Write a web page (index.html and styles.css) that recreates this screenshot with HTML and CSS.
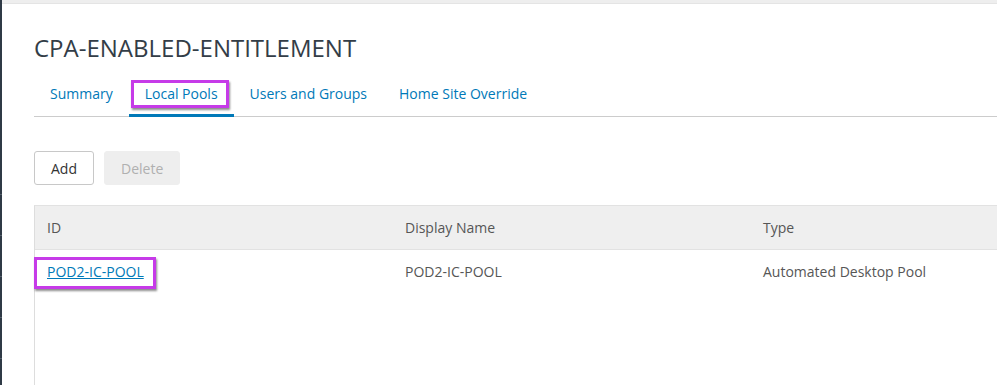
FILE: index.html
```html
<!DOCTYPE html>
<html>
  <head>
    <title>CPA-ENABLED-ENTITLEMENT - Local Pools</title>
    <link rel="stylesheet" href="styles.css">
  </head>
  <body>
    <aside class="side-nav">
      <div class="side-item"></div>
      <div class="side-item"></div>
      <div class="side-item"></div>
      <div class="side-item"></div>
      <div class="side-item"></div>
    </aside>

    <main class="content">
      <div class="top-band"></div>

      <div class="page">
        <h1 class="page-title">CPA-ENABLED-ENTITLEMENT</h1>

        <nav class="tabs">
          <a class="tab">Summary</a>
          <a class="tab active">Local Pools<span class="mark mark-tab"></span></a>
          <a class="tab">Users and Groups</a>
          <a class="tab">Home Site Override</a>
        </nav>

        <div class="toolbar">
          <button class="btn">Add</button>
          <button class="btn btn-disabled" disabled>Delete</button>
        </div>

        <div class="datagrid">
          <div class="dg-row dg-head">
            <div class="dg-cell">ID</div>
            <div class="dg-cell">Display Name</div>
            <div class="dg-cell">Type</div>
            <div class="dg-cell"></div>
          </div>
          <div class="dg-row">
            <div class="dg-cell">
              <a class="dg-link">POD2-IC-POOL</a>
              <span class="mark mark-cell"></span>
            </div>
            <div class="dg-cell">POD2-IC-POOL</div>
            <div class="dg-cell">Automated Desktop Pool</div>
            <div class="dg-cell"></div>
          </div>
        </div>
      </div>
    </main>
  </body>
</html>
```

FILE: styles.css
```css
:root {
  --nav-dark: #2f3a46;
  --link-blue: #0079b8;
  --text-gray: #565656;
  --line-gray: #dddddd;
  --mark-purple: #c63be8;
}

html,
body {
  margin: 0;
  height: 100%;
}

body {
  display: flex;
  background: #ffffff;
  font-family: "Open Sans", "Liberation Sans", sans-serif;
  overflow: hidden;
}

/* Collapsed side navigation */
.side-nav {
  width: 2px;
  flex-shrink: 0;
  background: var(--nav-dark);
  padding-top: 194px;
}

.side-item {
  height: 40px;
  border-top: 1px solid #55606b;
}

/* Main area */
.content {
  flex: 1;
  min-width: 0;
  overflow: hidden;
}

.top-band {
  height: 3px;
  background: #eeeeee;
  border-bottom: 1px solid #e4e4e4;
}

.page {
  padding: 28px 0 0 32px;
}

.page-title {
  margin: 0;
  font-size: 24px;
  line-height: 32px;
  font-weight: 400;
  color: #333d47;
}

/* Tabs */
.tabs {
  display: flex;
  margin-top: 18px;
  border-bottom: 1px solid #cccccc;
}

.tab {
  position: relative;
  padding: 0 16px 8px;
  font-size: 14px;
  line-height: 24px;
  color: var(--link-blue);
  border-bottom: 3px solid transparent;
  margin-bottom: -1px;
  cursor: pointer;
}

.tab.active {
  border-bottom-color: var(--link-blue);
}

/* Buttons */
.toolbar {
  display: flex;
  gap: 10px;
  margin-top: 34px;
}

.btn {
  height: 34px;
  padding: 0 16px;
  font-family: inherit;
  font-size: 14px;
  color: #333333;
  background: #ffffff;
  border: 1px solid #c8c8c8;
  border-radius: 3px;
  cursor: pointer;
}

.btn-disabled {
  color: #b0b0b0;
  background: #eeeeee;
  border-color: #eeeeee;
  cursor: default;
}

/* Datagrid */
.datagrid {
  margin-top: 20px;
  width: 1440px;
  min-height: 200px;
  border-left: 1px solid var(--line-gray);
  border-top: 1px solid #e2e2e2;
}

.dg-row {
  display: flex;
  height: 42px;
  align-items: center;
}

.dg-head {
  height: 43px;
  background: #efefef;
  border-bottom: 1px solid #e2e2e2;
}

.dg-cell {
  position: relative;
  width: 358px;
  padding-left: 12px;
  box-sizing: border-box;
  font-size: 14px;
  color: var(--text-gray);
}

.dg-link {
  color: var(--link-blue);
  text-decoration: underline;
  cursor: pointer;
}

/* Highlight boxes drawn over the screenshot */
.mark {
  position: absolute;
  box-sizing: border-box;
  border: 3px solid var(--mark-purple);
  box-shadow: 1px 2px 2px rgba(0, 0, 0, 0.45);
  pointer-events: none;
}

.mark-tab {
  left: 2px;
  top: -2px;
  width: 98px;
  height: 28px;
}

.mark-cell {
  left: -1px;
  top: -5px;
  width: 122px;
  height: 32px;
}
```
